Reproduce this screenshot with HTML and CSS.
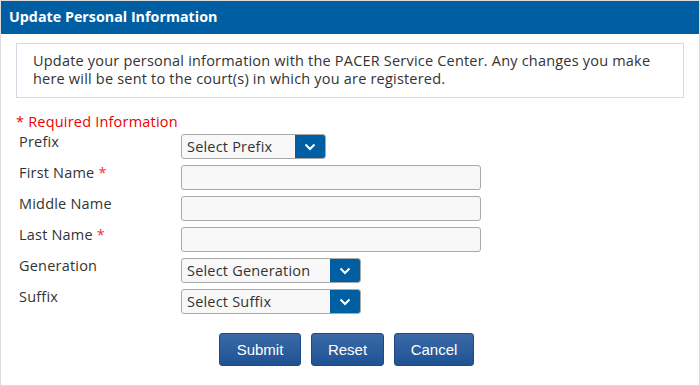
FILE: index.html
```html
<!DOCTYPE html>
<html lang="en">
<head>
  <meta charset="UTF-8" />
  <title>Update Personal Information</title>
  <link rel="stylesheet" href="styles.css">
</head>
<body>
  <div class="panel">
    <div class="panel-heading">Update Personal Information</div>
    <div class="panel-body">
      <div class="notice">
        Update your personal information with the PACER Service Center. Any changes you make<br>
        here will be sent to the court(s) in which you are registered.
      </div>

      <form class="person-form">
        <div class="required-note">* Required Information</div>

        <div class="row">
          <label>Prefix</label>
          <div class="select prefix">
            <span>Select Prefix</span>
            <span class="caret"><svg width="12" height="8" viewBox="0 0 12 8"><path d="M1.5 1.5 L6 6 L10.5 1.5" fill="none" stroke="#fff" stroke-width="2"/></svg></span>
          </div>
        </div>

        <div class="row">
          <label>First Name <span class="req">*</span></label>
          <input type="text" />
        </div>

        <div class="row">
          <label>Middle Name</label>
          <input type="text" />
        </div>

        <div class="row">
          <label>Last Name <span class="req">*</span></label>
          <input type="text" />
        </div>

        <div class="row">
          <label>Generation</label>
          <div class="select wide">
            <span>Select Generation</span>
            <span class="caret"><svg width="12" height="8" viewBox="0 0 12 8"><path d="M1.5 1.5 L6 6 L10.5 1.5" fill="none" stroke="#fff" stroke-width="2"/></svg></span>
          </div>
        </div>

        <div class="row">
          <label>Suffix</label>
          <div class="select wide">
            <span>Select Suffix</span>
            <span class="caret"><svg width="12" height="8" viewBox="0 0 12 8"><path d="M1.5 1.5 L6 6 L10.5 1.5" fill="none" stroke="#fff" stroke-width="2"/></svg></span>
          </div>
        </div>

        <div class="buttons">
          <button type="button" class="btn submit">Submit</button>
          <button type="button" class="btn reset">Reset</button>
          <button type="button" class="btn cancel">Cancel</button>
        </div>
      </form>
    </div>
  </div>
</body>
</html>
```

FILE: styles.css
```css
* {
  margin: 0;
  padding: 0;
  box-sizing: border-box;
}

body {
  font-family: 'Open Sans', 'Noto Sans', sans-serif;
  font-size: 14.5px;
  letter-spacing: 0.2px;
  background: #fff;
  color: #333;
}

.panel {
  width: 700px;
  height: 386px;
  border: 1px solid #dcdcdc;
  background: #fff;
}

.panel-heading {
  height: 33px;
  background: #005ea2;
  color: #fff;
  font-weight: bold;
  font-size: 14.3px;
  letter-spacing: 0;
  padding: 6px 0 0 8px;
}

.panel-body {
  padding: 9px 15px 0 15px;
}

.notice {
  border: 1px solid #d3dae3;
  padding: 8px 10px 9px 16px;
  line-height: 18px;
  color: #333;
  white-space: nowrap;
}

.person-form {
  margin-top: 15px;
}

.required-note {
  color: #ee0000;
  line-height: 18px;
  margin-bottom: 3px;
}

.row {
  display: flex;
  align-items: flex-start;
  margin-bottom: 6px;
}

.row label {
  width: 165px;
  padding-left: 3px;
  line-height: 18px;
  color: #333;
  margin-top: -1px;
}

.req {
  color: #e33;
}

.row input {
  width: 300px;
  height: 25px;
  border: 1px solid #a9a9a9;
  border-radius: 3px;
  background: #f8f8f8;
}

.select {
  display: flex;
  justify-content: space-between;
  height: 25px;
  border: 1px solid #a9a9a9;
  border-radius: 3px;
  background: #f8f8f8;
  overflow: hidden;
  color: #333;
}

.select span:first-child {
  padding: 2px 0 0 5px;
}

.select.prefix {
  width: 145px;
}

.select.wide {
  width: 180px;
}

.caret {
  width: 30px;
  background: #005ea2;
  display: flex;
  align-items: center;
  justify-content: center;
}

.buttons {
  display: flex;
  justify-content: center;
  gap: 10px;
  margin-top: 19px;
  padding-right: 7px;
}

.btn {
  height: 33px;
  border: 1px solid #1d4a85;
  border-radius: 3px;
  background: linear-gradient(to bottom, #3b6aa6, #1f5294);
  color: #fff;
  font-family: 'Liberation Sans', Arial, sans-serif;
  font-size: 15px;
  letter-spacing: 0;
}

.btn.submit {
  width: 82px;
}

.btn.reset {
  width: 73px;
}

.btn.cancel {
  width: 80px;
}
```
